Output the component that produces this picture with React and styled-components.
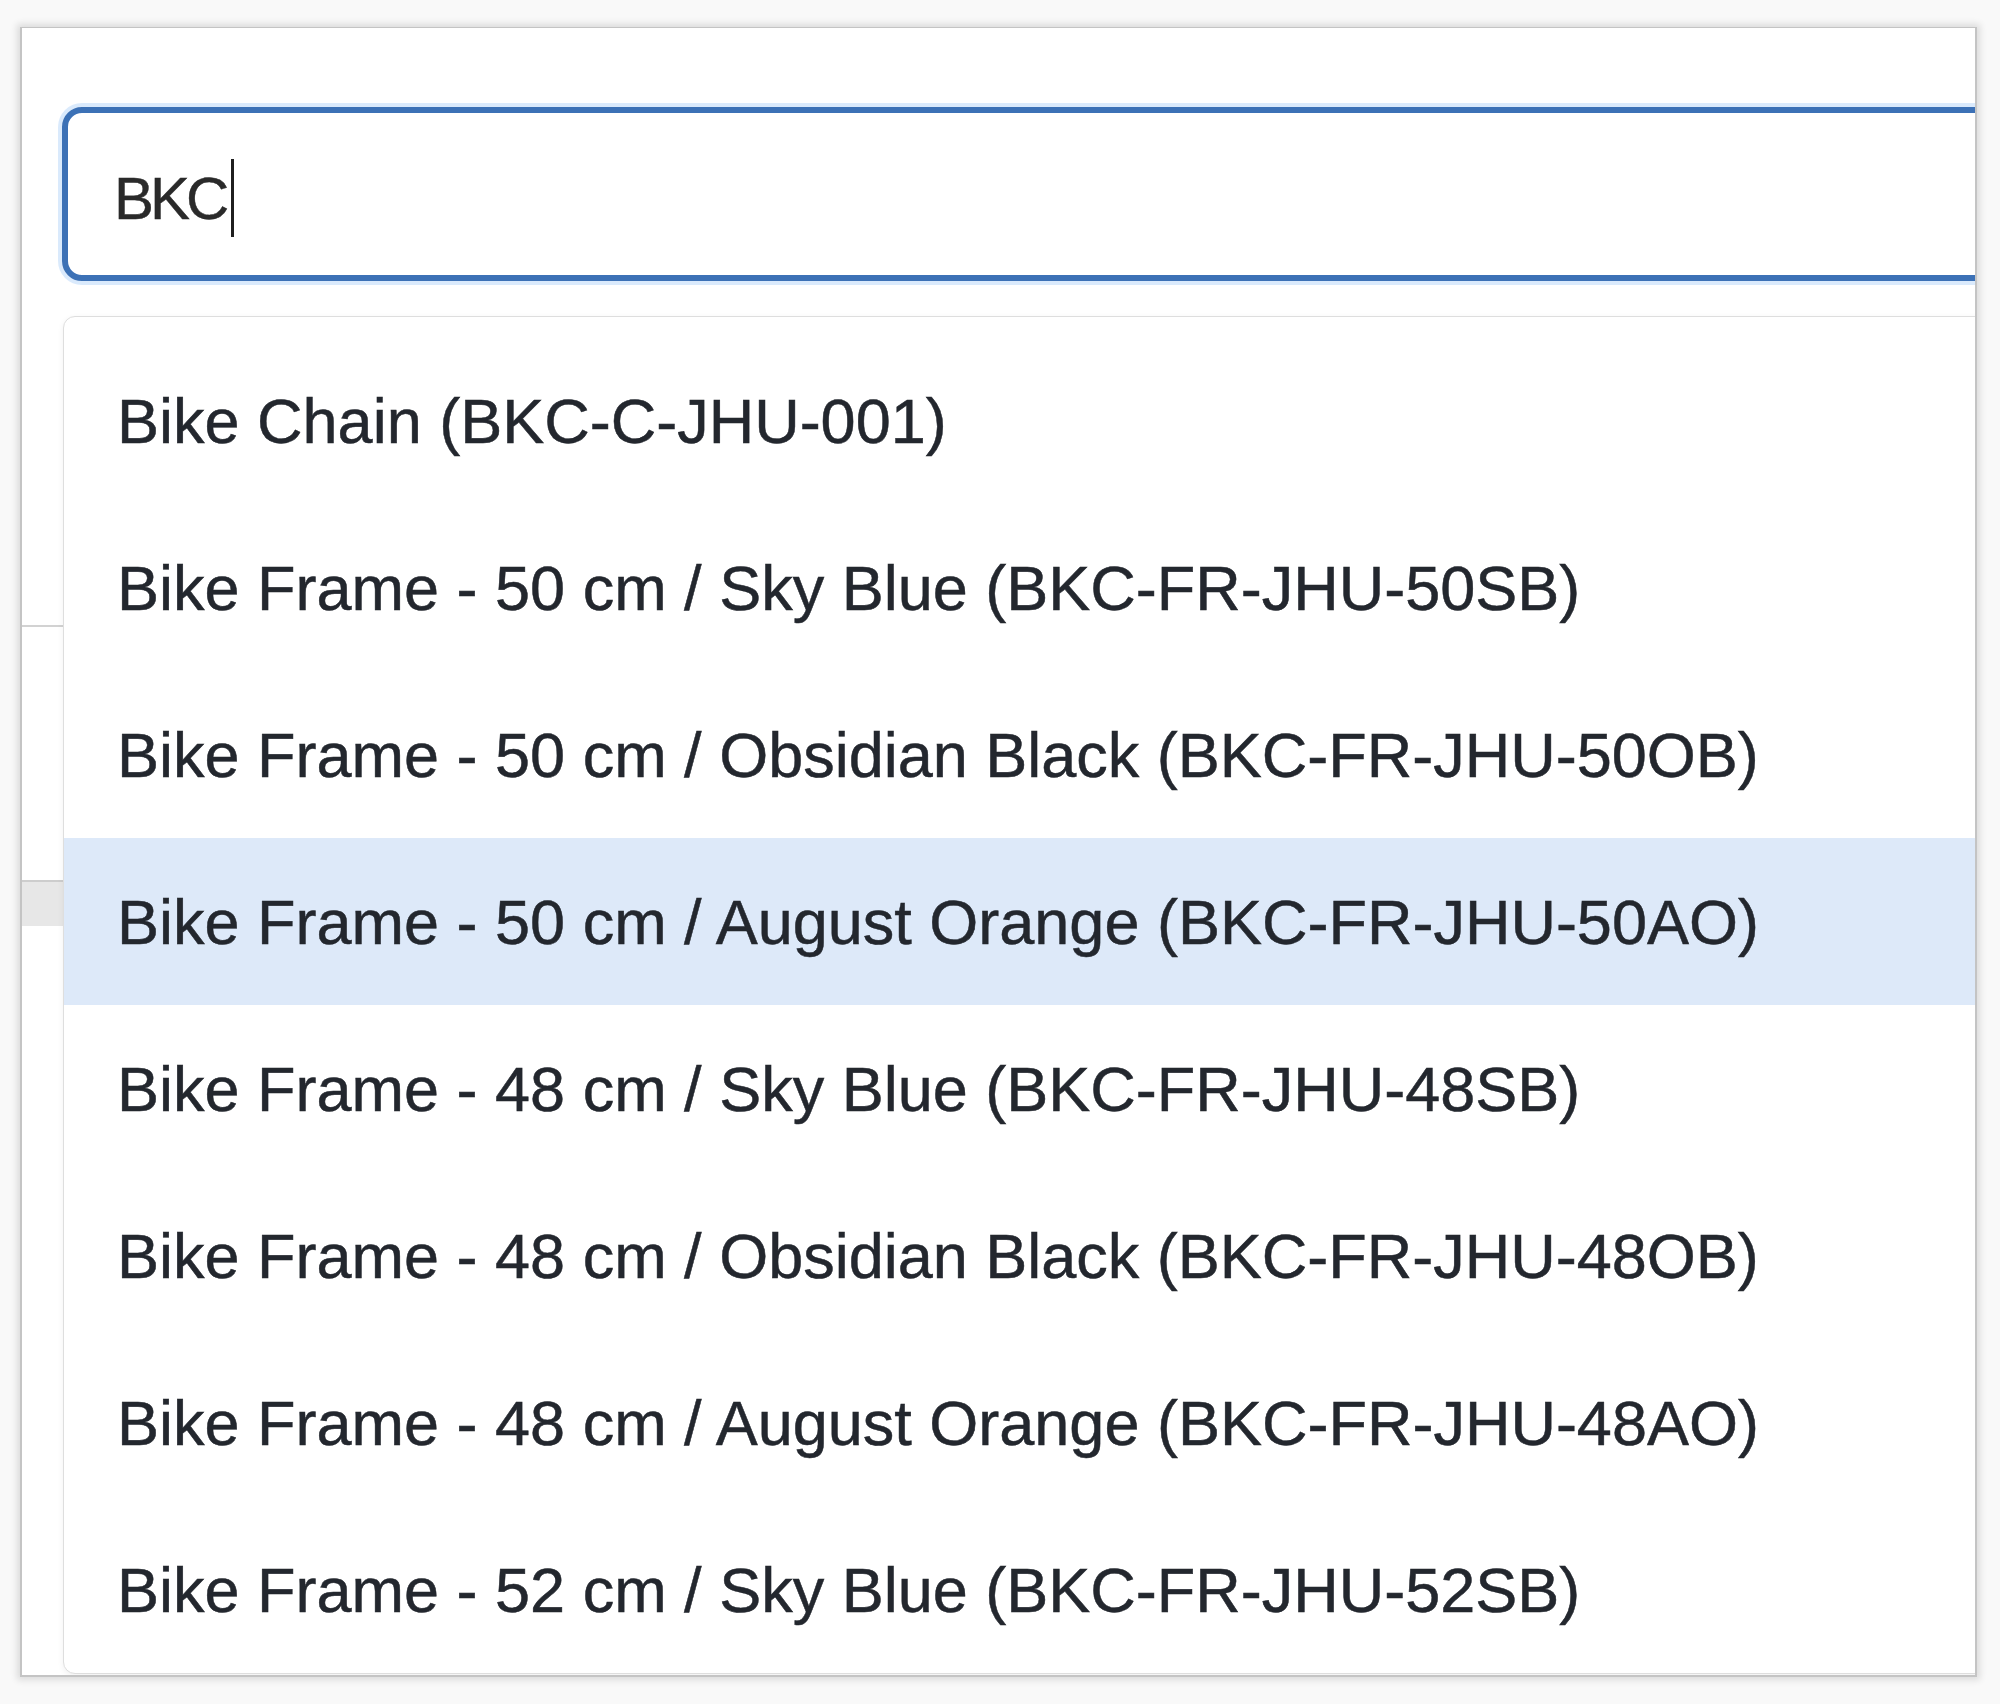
import React from "react";
import styled, { createGlobalStyle } from "styled-components";

const GlobalStyle = createGlobalStyle`
  html, body {
    margin: 0;
    padding: 0;
    background: #f9f9f9;
    font-family: "Liberation Sans", Arial, sans-serif;
  }
  #root {
    width: 2000px;
    height: 1704px;
    overflow: hidden;
  }
`;

const Page = styled.div`
  width: 2000px;
  height: 1704px;
  padding: 27px 0 0 20px;
  box-sizing: border-box;
`;

const Panel = styled.div`
  position: relative;
  width: 1957px;
  height: 1650px;
  box-sizing: border-box;
  background: #ffffff;
  border: 2px solid #c4c4c4;
  border-top-width: 1px;
  box-shadow: 0 0 7px 3px rgba(0, 0, 0, 0.12);
  overflow: hidden;
  padding-top: 79px;
`;

const FieldWrap = styled.div`
  padding-left: 40px;
`;

const SearchField = styled.div`
  width: 2100px;
  height: 174px;
  box-sizing: border-box;
  border: 6px solid #3c71b6;
  border-radius: 20px;
  box-shadow: 0 0 0 4px rgba(150, 195, 245, 0.35);
  display: flex;
  align-items: center;
  padding: 8px 0 0 46px;
  font-size: 60px;
  letter-spacing: -4px;
  color: #2a2a2a;
  -webkit-text-stroke: 0.4px #2a2a2a;
`;

const Caret = styled.span`
  display: inline-block;
  width: 3px;
  height: 78px;
  background: #1f1f1f;
  margin-left: 6px;
`;

const TableRow = styled.div`
  height: ${(p) => p.$height}px;
  box-sizing: border-box;
  background: ${(p) => (p.$band ? "#e7e7e7" : "transparent")};
  border-top: ${(p) => (p.$band ? "2px solid #cdcdcd" : "none")};
  border-bottom: ${(p) => (p.$rule ? "2px solid #d2d2d2" : "none")};
`;

const Dropdown = styled.ul`
  position: absolute;
  top: 288px;
  left: 41px;
  width: 2100px;
  margin: 0;
  padding: 20px 0 0 0;
  list-style: none;
  background: #ffffff;
  border: 1px solid #dedede;
  border-radius: 12px;
  box-shadow: 0 2px 6px rgba(0, 0, 0, 0.06);
  overflow: hidden;
`;

const Option = styled.li`
  height: 167px;
  display: flex;
  align-items: center;
  padding-left: 53px;
  font-size: 63px;
  color: #23272e;
  -webkit-text-stroke: 0.5px #23272e;
  white-space: nowrap;
  background: ${(p) => (p.$active ? "#dde9f9" : "transparent")};
`;

const options = [
  "Bike Chain (BKC-C-JHU-001)",
  "Bike Frame - 50 cm / Sky Blue (BKC-FR-JHU-50SB)",
  "Bike Frame - 50 cm / Obsidian Black (BKC-FR-JHU-50OB)",
  "Bike Frame - 50 cm / August Orange (BKC-FR-JHU-50AO)",
  "Bike Frame - 48 cm / Sky Blue (BKC-FR-JHU-48SB)",
  "Bike Frame - 48 cm / Obsidian Black (BKC-FR-JHU-48OB)",
  "Bike Frame - 48 cm / August Orange (BKC-FR-JHU-48AO)",
  "Bike Frame - 52 cm / Sky Blue (BKC-FR-JHU-52SB)",
];

export default function App() {
  return (
    <>
      <GlobalStyle />
      <Page>
        <Panel>
          <FieldWrap>
            <SearchField>
              BKC
              <Caret />
            </SearchField>
          </FieldWrap>
          <TableRow $height={346} $rule />
          <TableRow $height={253} />
          <TableRow $height={46} $band />
          <Dropdown>
            {options.map((o, i) => (
              <Option key={o} $active={i === 3}>
                {o}
              </Option>
            ))}
          </Dropdown>
        </Panel>
      </Page>
    </>
  );
}
